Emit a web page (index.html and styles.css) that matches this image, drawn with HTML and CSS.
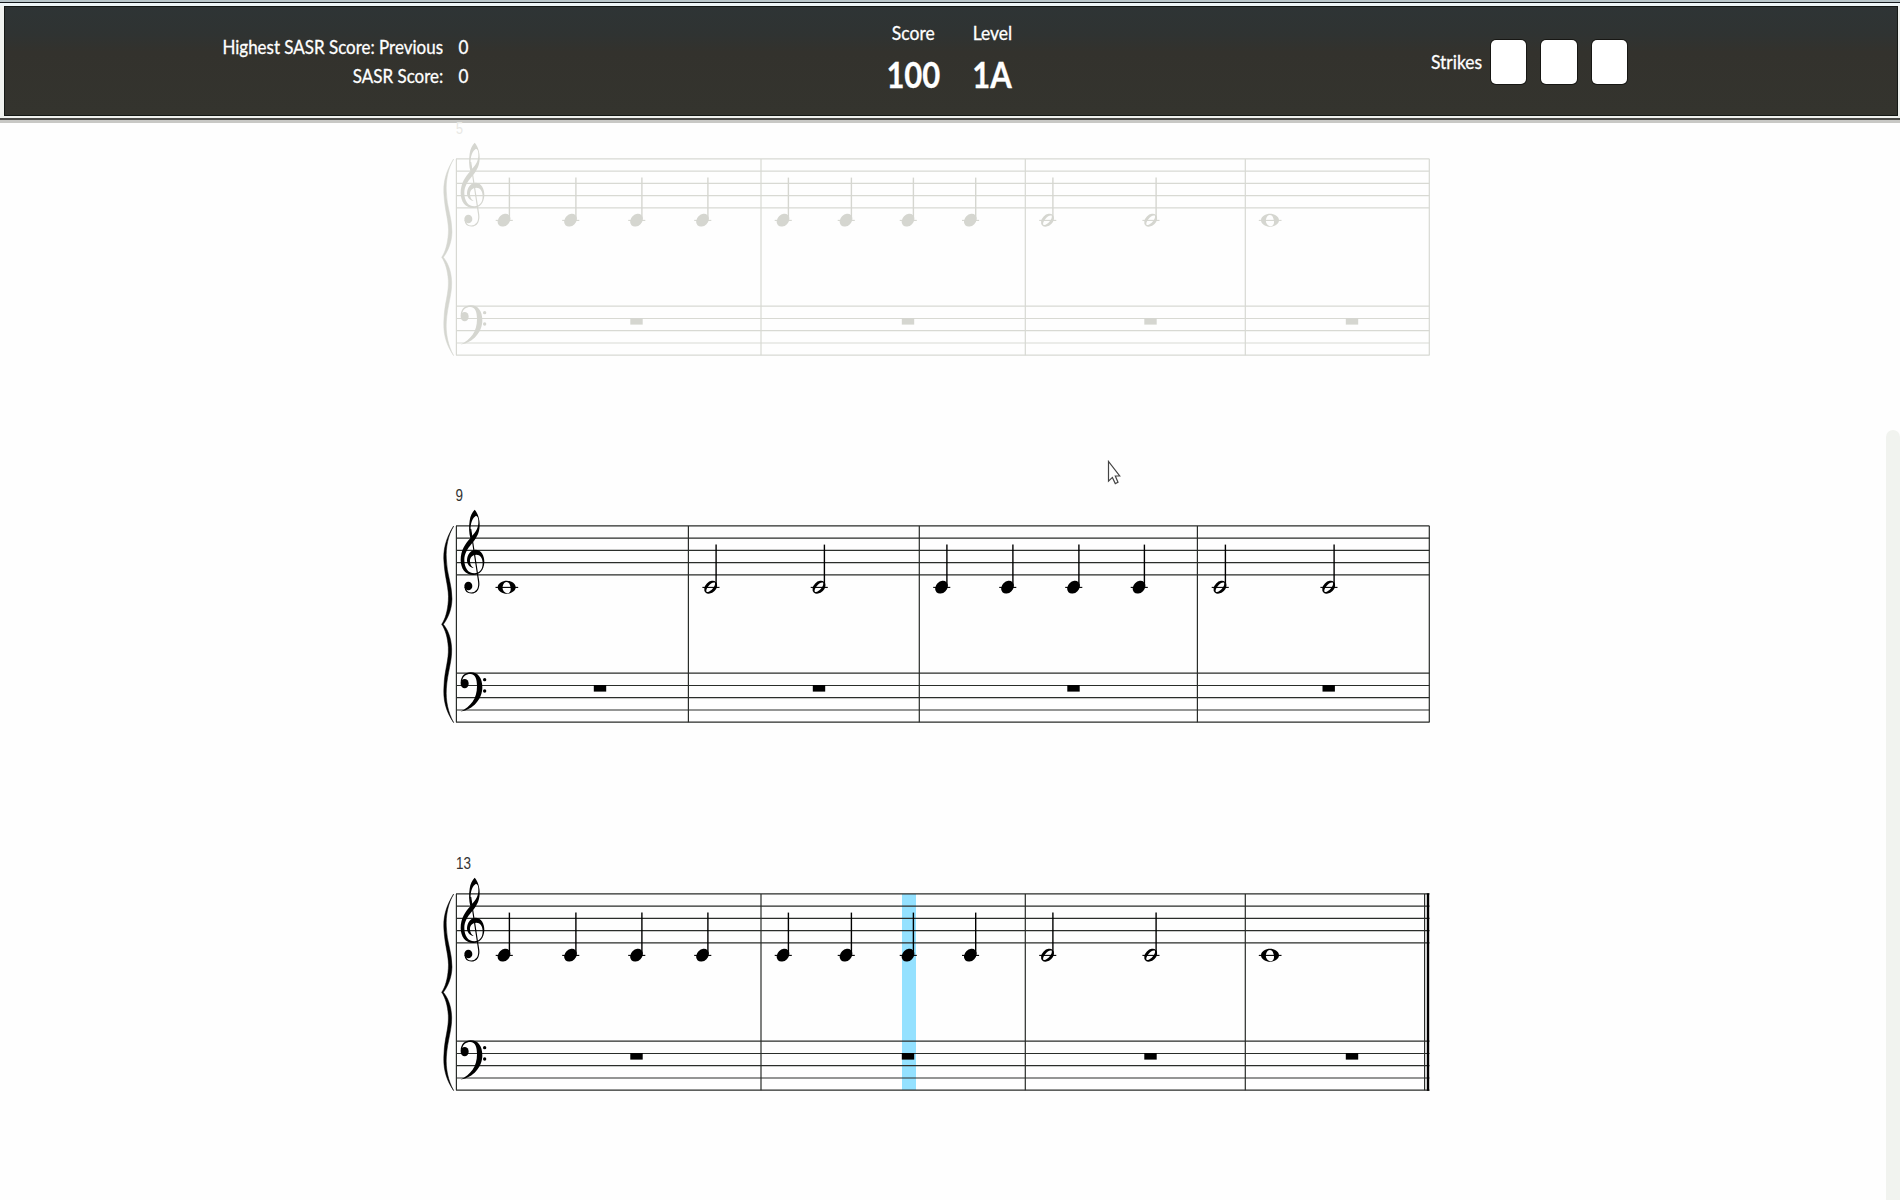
FILE: index.html
```
<!DOCTYPE html>
<html lang="en">
<head>
<meta charset="utf-8">
<title>Sight reading</title>
<link rel="stylesheet" href="styles.css">
</head>
<body>
<svg class="defs" width="0" height="0" aria-hidden="true">
  <defs>
    <g id="frame">
      <path class="line" d="M26 38.9H999.5M26 51.1H999.5M26 63.4H999.5M26 75.6H999.5M26 87.9H999.5M26 186.2H999.5M26 198.5H999.5M26 210.7H999.5M26 223H999.5M26 235.2H999.5M26.4 38.9V235.2"/>
      <g transform="translate(0 -8) scale(.33333)">
        <path class="brace" d="M71 141C46 180 39 215 42 250C45 300 58 330 55 365C53 395 46 420 35 436C46 452 53 475 55 505C57 545 44 570 42 620C39 660 46 695 71 731C54 700 47 665 49 630C52 580 66 550 65 510C64 475 52 450 40 436C52 420 65 395 66 360C66 315 50 285 49 240C47 205 54 170 71 141Z"/>
        <path fill-rule="evenodd" d="M134 92C143 102 150 120 149 140C148 165 137 180 125 194C112 209 103 224 103 243C103 266 114 283 133 283C150 283 158 270 158 253C158 237 150 227 139 227C127 227 119 236 120 248C121 257 124 262 131 267C118 265 111 255 111 243C112 226 123 212 137 212C153 212 164 230 163 250C162 274 149 288 130 288C106 288 92 268 92 243C92 215 106 194 121 178C117 160 116 145 119 125C121 110 126 100 134 92ZM138 110C128 116 121 132 122 152L125 172C139 157 146 145 145 126C145 117 143 112 138 110Z"/>
        <path class="swash" d="M122 150L146 308C149 330 138 342 124 342C113 342 106 335 105 324"/>
        <ellipse cx="115" cy="321" rx="12" ry="13"/>
        <ellipse cx="104" cy="614" rx="12" ry="14"/>
        <path d="M92 612C92 590 106 580 122 580C145 580 157 598 157 625C157 660 130 692 92 698C122 682 141 660 141 622C141 600 136 585 121 585C108 585 98 592 97 605Z"/>
        <circle cx="164" cy="602" r="5"/>
        <circle cx="164" cy="636" r="5"/>
      </g>
    </g>
    <g id="quarter">
      <path class="ledger" d="M-8.3 .2H8.8"/>
      <ellipse rx="7.1" ry="5.6" transform="rotate(-45)"/>
      <path class="stem" d="M5.4 -1V-42.6"/>
    </g>
    <g id="half">
      <path class="ledger" d="M-8.3 .2H8.8"/>
      <path fill-rule="evenodd" transform="rotate(-45)" d="M-7.4 0A7.4 5.4 0 1 0 7.4 0A7.4 5.4 0 1 0 -7.4 0ZM-6.2 .3C-5 -3 5 -3.8 6.2 -.3C5 3 -5 3.8 -6.2 .3Z"/>
      <path class="stem" d="M5.4 -1V-42.6"/>
    </g>
    <g id="whole">
      <path class="ledger" d="M-11.2 .2H11.5"/>
      <path fill-rule="evenodd" d="M-9 0C-9 -4 -4 -6.5 0 -6.5S9 -4 9 0S4 6.5 0 6.5S-9 4 -9 0ZM-4 -1C-3 -6.3 2 -6.7 3.3 -2C5 3 3.5 6 .8 6C-2.5 6 -4.8 2.5 -4 -1Z"/>
    </g>
    <rect id="rest" x="-6.2" y="198" width="12.4" height="6.6"/>
  </defs>
</svg>

<header class="topbar">
  <div class="panel">
    <dl class="records">
      <dt>Highest SASR Score: Previous</dt><dd>0</dd>
      <dt>SASR Score:</dt><dd>0</dd>
    </dl>
    <div class="stats">
      <div class="stat"><span class="label">Score</span><strong>100</strong></div>
      <div class="stat"><span class="label">Level</span><strong>1A</strong></div>
    </div>
    <div class="strikes">
      <span class="label">Strikes</span>
      <i class="box"></i><i class="box"></i><i class="box"></i>
    </div>
  </div>
</header>

<main class="sheet">
  <svg class="system played" viewBox="0 0 1010 248">
    <text x="26" y="14" textLength="7" lengthAdjust="spacingAndGlyphs" class="ghost">5</text>
    <use href="#frame"/>
    <path class="line" d="M331 38.9V235.2M595.3 38.9V235.2M815.3 38.9V235.2M999.3 38.9V235.2"/>
    <g transform="translate(0 100.2)">
      <use href="#quarter" x="74"/><use href="#quarter" x="140.5"/><use href="#quarter" x="206.5"/><use href="#quarter" x="272.5"/>
      <use href="#quarter" x="353"/><use href="#quarter" x="416"/><use href="#quarter" x="478"/><use href="#quarter" x="540.3"/>
      <use href="#half" x="617.5"/><use href="#half" x="720.7"/>
      <use href="#whole" x="840"/>
    </g>
    <use href="#rest" x="206.5"/><use href="#rest" x="478"/><use href="#rest" x="720.5"/><use href="#rest" x="922"/>
  </svg>

  <svg class="system" viewBox="0 0 1010 248">
    <text x="25.5" y="14" textLength="7.5" lengthAdjust="spacingAndGlyphs">9</text>
    <use href="#frame"/>
    <path class="line" d="M258.4 38.9V235.2M489.3 38.9V235.2M767.4 38.9V235.2M999.3 38.9V235.2"/>
    <g transform="translate(0 100.2)">
      <use href="#whole" x="76.7"/>
      <use href="#half" x="280.7"/><use href="#half" x="389"/>
      <use href="#quarter" x="511.5"/><use href="#quarter" x="577.5"/><use href="#quarter" x="643.5"/><use href="#quarter" x="709"/>
      <use href="#half" x="790"/><use href="#half" x="898.7"/>
    </g>
    <use href="#rest" x="170"/><use href="#rest" x="389"/><use href="#rest" x="643.5"/><use href="#rest" x="898.7"/>
  </svg>

  <svg class="system" viewBox="0 0 1010 248">
    <rect class="cursor" x="472" y="39" width="14" height="196"/>
    <text x="26" y="14" textLength="15" lengthAdjust="spacingAndGlyphs">13</text>
    <use href="#frame"/>
    <path class="line" d="M331 38.9V235.2M595.3 38.9V235.2M815.3 38.9V235.2M994.6 38.9V235.2"/>
    <path class="final" d="M998 38.3V235.8"/>
    <g transform="translate(0 100.2)">
      <use href="#quarter" x="74"/><use href="#quarter" x="140.5"/><use href="#quarter" x="206.5"/><use href="#quarter" x="272.5"/>
      <use href="#quarter" x="353"/><use href="#quarter" x="416"/><use href="#quarter" x="478"/><use href="#quarter" x="540.3"/>
      <use href="#half" x="617.5"/><use href="#half" x="720.7"/>
      <use href="#whole" x="840"/>
    </g>
    <use href="#rest" x="206.5"/><use href="#rest" x="478"/><use href="#rest" x="720.5"/><use href="#rest" x="922"/>
  </svg>
</main>

<div class="scrollbar"></div>
<svg class="pointer" viewBox="0 0 14 26"><path d="M1.5 1.5V21.2L5.4 17.4L8.3 23.6L11 22.3L8.3 16H12.7Z"/></svg>
</body>
</html>
```
FILE: styles.css
```
* { box-sizing: border-box; }

body {
  --ink: #000;
  --rule: #2a2d2a;
  margin: 0;
  width: 1900px;
  height: 1200px;
  overflow: hidden;
  position: relative;
  background: #fefefe;
  font-family: Lato, "Noto Sans", sans-serif;
}

.defs { position: absolute; }

.topbar {
  height: 120px;
  padding: 6px 2px 3px 4px;
  background: linear-gradient(#b9c6ca 0 2px, #14191c 2px 3px, #eef6f8 3px 6px, #f0f2ef 6px 118px, #4b4b48 118px 120px);
  box-shadow: 0 3px 0 #c8c8c5;
}

.panel {
  height: 110px;
  padding-left: 218px;
  display: grid;
  grid-template-columns: 663px 545px 1fr;
  border: 1px solid #151916;
  background: linear-gradient(#2e3435 0, #2f3332 25%, #33322d 42%, #34342e 100%);
  color: #fff;
  font-size: 19px;
  line-height: 29px;
  -webkit-text-stroke: .3px #fff;
}

.records {
  margin: 0;
  padding-top: 25px;
  display: grid;
  grid-template-columns: 220px 10px;
  grid-auto-rows: 29px;
  column-gap: 15px;
  justify-content: start;
  text-align: right;
}

.records dt {
  white-space: nowrap;
  justify-self: end;
  transform: scaleX(.893);
  transform-origin: right;
}
.records dd { margin: 0; transform: scaleX(.9); }

.stats { display: flex; gap: 32px; padding-top: 11px; }
.stat { display: flex; flex-direction: column; align-items: center; width: 54px; }
.stat + .stat { width: 40px; }
.label { transform: scaleX(.92); }
.stat strong { font-size: 36px; line-height: 54px; font-weight: 700; transform: scaleX(.86); }

.strikes { display: flex; align-items: center; gap: 15px; height: 110px; }
.strikes .label { width: 48px; margin-top: -2px; transform-origin: left; white-space: nowrap; }
.strikes .label + .box { margin-left: -3.5px; }

.box {
  width: 35.5px;
  height: 44px;
  border-radius: 5px;
  background: #fff;
  box-shadow: 0 0 0 1px #171714;
}

.sheet {
  display: flex;
  flex-direction: column;
  gap: 120px;
  padding-left: 430px;
}

.system { display: block; width: 1010px; height: 248px; fill: var(--ink); overflow: visible; }
.system text { font: 16.5px "Liberation Sans", Arial, sans-serif; fill: #333; }
.line { fill: none; stroke: var(--rule); stroke-width: 1.2; }
.ledger { fill: none; stroke: var(--ink); stroke-width: 1.1; }
.stem { fill: none; stroke: var(--ink); stroke-width: 1.4; }
.brace { stroke: var(--ink); stroke-width: 1.5; }
.swash { fill: none; stroke: var(--ink); stroke-width: 3.5; }
.final { fill: none; stroke: var(--ink); stroke-width: 2.4; }
.cursor { fill: #94e1ff; }

.played { --ink: #d5d6d0; --rule: #d8d9d3; margin-bottom: -1px; }
.system .ghost { fill: #e8e8e4; }

.scrollbar {
  position: absolute;
  right: 0;
  top: 430px;
  width: 14px;
  height: 780px;
  border-radius: 7px;
  background: #f1f3ef;
}

.pointer {
  position: absolute;
  left: 1107px;
  top: 460px;
  width: 14px;
  height: 26px;
  fill: #fff;
  stroke: #444;
  stroke-width: 1.2;
}
```
